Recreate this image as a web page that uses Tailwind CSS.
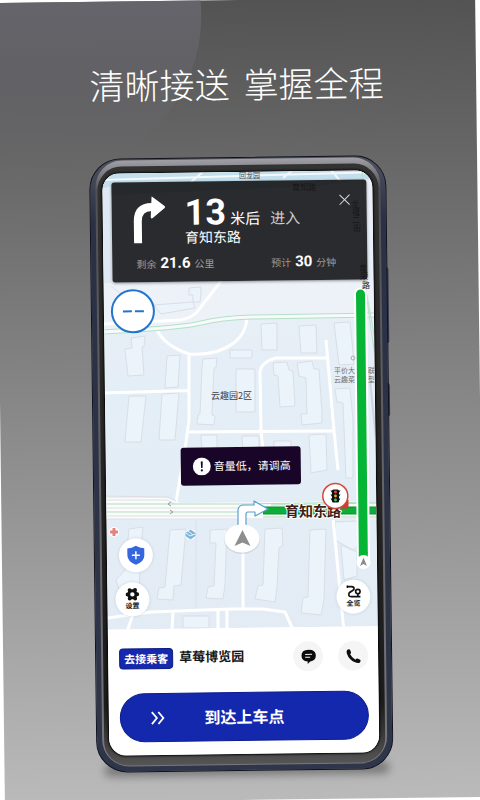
<!DOCTYPE html>
<html lang="zh-CN">
<head>
<meta charset="utf-8">
<meta name="viewport" content="width=device-width, initial-scale=1">
<title>清晰接送 掌握全程</title>
<script src="https://cdn.jsdelivr.net/npm/@tailwindcss/browser@4"></script>
</head>
<body class="bg-white font-['Noto_Sans','Noto_Sans_CJK_SC',sans-serif]">
<main class="min-h-screen overflow-hidden bg-white">
<div class="relative flex min-h-screen -rotate-[0.7deg] flex-col overflow-hidden bg-linear-to-b from-[#535353] via-[#878787] to-[#bababa] pb-[29px] pl-[92px] pr-[91px] pt-[59px]">
  <div class="absolute -left-[106px] -top-[142px] size-[312px] rounded-full bg-linear-to-b from-[#66666d] from-40% to-[#6a6a6e]/10" aria-hidden="true"></div>

  <h1 class="relative mb-[50px] flex justify-center gap-[14px] whitespace-nowrap font-['Noto_Sans_CJK_SC',sans-serif] text-[35px] font-light leading-[48px] text-white"><span>清晰接送</span><span>掌握全程</span></h1>

  <!-- Phone -->
  <div class="relative flex flex-1 flex-col">
    <div class="absolute -bottom-1 left-2 right-1 h-3 rounded-full bg-black/35 blur-[4px]" aria-hidden="true"></div>
    <div class="absolute -right-px top-[112px] h-[76px] w-1 rounded-sm bg-[#353b52]" aria-hidden="true"></div>
    <div class="absolute -right-px top-[228px] h-[33px] w-1 rounded-sm bg-[#353b52]" aria-hidden="true"></div>
    <div class="relative flex flex-1 flex-col rounded-[31px] border border-[#10131f] bg-linear-to-b from-[#50535f] via-[#2b3145] via-10% to-[#30364a] px-[5px] pb-[5px] pt-px">
      <div class="flex flex-1 flex-col rounded-[27px] bg-linear-to-b from-[#a0a0a6] via-[#505055] via-5% to-[#77777b] px-[2px] pb-px pt-[6px]">
        <div class="flex flex-1 flex-col rounded-[24px] bg-linear-to-b from-[#333] via-[#1c1c1c] via-90% to-[#555] pb-[10px] pl-[5px] pr-[6px] pt-[7px]">
          <div class="flex flex-1 flex-col overflow-hidden rounded-[17px] bg-white shadow-[0_0_2px_1px_#050505]">

            <!-- Map -->
            <section class="relative flex-1 overflow-hidden pl-[9px] pr-[6px] pt-[9px]" aria-label="导航地图">
              <svg class="absolute inset-0 size-full" viewBox="104 172 270 456" preserveAspectRatio="xMidYMid slice" font-family="Noto Sans CJK SC, sans-serif">
                <defs>
                  <linearGradient id="land" x1="0" x2="0" y1="0" y2="1"><stop offset="0" stop-color="#ecf0f8"/><stop offset=".5" stop-color="#e4eef6"/><stop offset="1" stop-color="#e3ecf5"/></linearGradient>
                </defs>
                <g transform="rotate(0.7 240 400)">
                  <rect x="90" y="160" width="300" height="480" fill="url(#land)"/>
                  <path d="M90 160H390V176L320 186L90 196Z" fill="#c3deec"/>
                  <path d="M100 180L380 172M190 182l14-12M282 178l10-8M330 170l10 12" stroke="#f2f8fb" stroke-width="2" fill="none"/>
                  <path d="M96 190L110 186V300H96Z" fill="#dfe9f3"/>
                  <path d="M103 283L250 281L374 280V313L230 317L205 322L103 330Z" fill="#edf1f8"/>
                  <!-- Buildings -->
                  <g fill="#ebf4fa" stroke="#d9dde6" stroke-width="1">
                    <path d="M153 305L192 302L194 308L160 314Z"/><path d="M188 288L200 287V294L199 302H192V295H188Z"/>
                    <path d="M130 338L144 336L143 347L141 347L143 375L127 376L124 349L131 348Z"/>
                    <path d="M166 356L179 355L177 387L164 388Z"/>
                    <path d="M202 359L216 358L215 368L213 368L211 415L214 416L213 425L196 424L197 415L199 414L201 368Z"/>
                    <path d="M128 396L145 396L140 442L124 442Z"/><path d="M161 394L178 393L174 440L158 440Z"/>
                    <path d="M229 350L251 350V358H229Z"/><path d="M235 369H254V412H235Z"/>
                    <path d="M260 324L276 323V350L261 350Z"/><path d="M298 326L315 325L316 353L300 353Z"/>
                    <path d="M333 323L349 322L352 352L353 364L338 365Z"/>
                    <path d="M272 363L286 362L288 370L292 371L294 406L279 407L277 376L273 375Z"/>
                    <path d="M296 363L311 361L313 369L318 369L321 413V423L301 425L300 414L306 414L305 378L298 376Z"/>
                    <path d="M334 389L349 388L352 420V478H345L342 403L336 402Z"/>
                    <path d="M200 435H216V450H201Z"/><path d="M241 436H258V448H242Z"/><path d="M273 441H290V450H273Z"/><path d="M308 435L325 434L326 470L310 473Z"/>
                    <path d="M128 529L142 527L140 548L138 590L118 589L115 580L124 570Z"/>
                    <path d="M169 530L185 529L180 585L173 586L172 600L156 599L158 588L164 587Z"/>
                    <path d="M209 530L226 529L224 585L222 599L205 598L207 587L213 586L215 543H209Z"/>
                    <path d="M264 529L281 528L282 545L278 548L276 587L274 602L254 599L257 586L262 585Z"/>
                    <path d="M309 530L325 529L323 600L320 615L300 613L302 598L307 597Z"/>
                    <path d="M334 522L356 521L358 545L352 550L334 540Z"/><path d="M340 545L356 552V576L343 580Z"/>
                    <path d="M182 616H208V628H182Z"/>
                  </g>
                  <path d="M195 520V610M110 286l10 8" stroke="#d8e2ec" stroke-width="1" fill="none"/>
                  <!-- Side streets -->
                  <g fill="none" stroke="#fff" stroke-width="3" stroke-linejoin="round">
                    <path d="M100 324L180 320Q190 318 196 312L224 276"/>
                    <path d="M156 330Q164 346 188 354Q216 356 234 342Q245 333 246 318"/>
                    <path d="M188 354V420L185 442L175 502M100 393L188 390.500M188 432L333 431"/>
                    <path d="M263 460L260 430L259 372Q260 362 275 358L326 358M325 340L333 431L337 470M332 518L343 632"/>
                    <path d="M242 545V609M100 619L150 612L230 609H262L284 612L293 632M172 611L171 630M217 609V630M226 609V630M132 614L126 632"/>
                  </g>
                  <g fill="none"><path d="M100 332Q180 328 200 323T250 317L376 315" stroke="#b4e0c8" stroke-width="5"/><path d="M100 332Q180 328 200 323T250 317L376 315" stroke="#f6fbfa" stroke-width="3"/></g>
                  <path d="M364 285L375 345V480M366 300L380 400M361 160L364 285" stroke="#b8e2c9" stroke-width="1" fill="none"/>
                  <path d="M368 370L376 450V500" stroke="#cfd3dc" stroke-width="2" fill="none"/>
                  <!-- Main road -->
                  <path d="M100 498L165 498L180 503L380 501V520L100 519Z" fill="#fafcfc"/>
                  <path d="M100 496L168 497L175 501M100 500L166 500L174 504M100 516H236M100 519H380M100 508H240" stroke="#dedee2" stroke-width="1" fill="none"/>
                  <path d="M100 504H240L380 502M100 512H240M270 505L380 503M262 517H380" stroke="#afdeba" stroke-width="1" fill="none"/>
                  <path d="M170 502l-3 2 3 2M169 510l3 2-3 2" stroke="#999" fill="none"/>
                  <!-- Route -->
                  <path d="M262 510.500H380" stroke="#0e8c34" stroke-width="8"/><path d="M262 510.500H380" stroke="#0bae36" stroke-width="6"/>
                  <path d="M359.500 294L362.500 562" stroke="#fff" stroke-width="13" stroke-linecap="round"/>
                  <path d="M359.500 294L362.300 552" stroke="#06b535" stroke-width="9" stroke-linecap="round"/>
                  <path d="M357.800 552H366.800V557H357.800Z" fill="#06b535"/>
                  <circle cx="362.500" cy="562" r="7" fill="#fff"/><path d="M362.500 557.500L366 566L362.500 564L359 566Z" fill="#8b8b8b"/>
                  <path d="M237 528V511Q237 505 243 505H253V501L267 509L254 516V512H247Q245 512 245 514V528Z" fill="#fff" stroke="#5a9fd0" stroke-width="1.200" stroke-linejoin="round"/>
                  <ellipse cx="241" cy="539.500" rx="18" ry="14.500" fill="#9aa7b5" opacity=".3"/>
                  <ellipse cx="241" cy="538.500" rx="17.500" ry="14" fill="#fff"/><path d="M241.500 530L249.500 546L241.500 542.500L233.500 546Z" fill="#8e8e8e"/>
                  <text x="284" y="516" font-size="14" font-weight="700" fill="#3b1f18" stroke="#fff" stroke-width="2" paint-order="stroke" stroke-linejoin="round">育知东路</text>
                  <path d="M339 508L347 500V508Z" fill="#d83a32" stroke="#d83a32"/>
                  <circle cx="334.300" cy="496" r="12.500" fill="#fff" stroke="#d4453d" stroke-width="1.500"/>
                  <rect x="331" y="489.500" width="7" height="13" rx="1.500" fill="#111"/><path d="M329.500 490.500h10l-2 3h-6zM329.500 494.500h10l-2 3h-6zM329.500 498.500h10l-2 3h-6z" fill="#111"/>
                  <circle cx="334.500" cy="492" r="1.400" fill="#e04b3c"/><circle cx="334.500" cy="496" r="1.400" fill="#e8a33a"/><circle cx="334.500" cy="500" r="1.400" fill="#44c35b"/>
                  <!-- Places -->
                  <circle cx="113" cy="532" r="5" fill="#fff"/><path d="M111.500 528h3v2.500h2.500v3h-2.500v2.500h-3v-2.500h-2.500v-3h2.500z" fill="#e5827f"/>
                  <circle cx="189.500" cy="534.500" r="5.500" fill="#f5fafd"/><path d="M189.500 529.500l5 3.500v3l-5 3.500-5-3.500v-3z" fill="#7fb4dc"/><path d="M185 533l4 3 5-2M187 531l5 4" stroke="#e8f3fb" fill="none"/>
                  <text x="238" y="178" font-size="7" fill="#4c4f55">回龙园</text>
                  <text x="210" y="399" font-size="9" fill="#3d4046">云趣园2区</text>
                  <g font-size="7" fill="#6c6f76"><text x="333" y="373">平价大</text><text x="333" y="382">云趣菜</text><text x="367" y="373">联</text><text x="367" y="382">型</text></g>
                  <circle cx="352" cy="358" r="2" fill="none" stroke="#a9abb0"/>
                  <g fill="#222" font-size="8"><text x="291" y="190">育知路</text><text x="350 351 351 352" y="207 215 223 231">龙禧二街</text><text x="358 359 361" y="271 279 288">育荣路</text></g>
                </g>
              </svg>

              <!-- Turn instruction -->
              <div class="relative h-[100px] rounded-[3px] bg-[#151517]/90 pt-[14px] text-white shadow-[0_1px_3px_#0006]">
                <svg class="absolute left-[21px] top-[14px] h-[48px] w-[34px]" viewBox="0 0 34 48" fill="none" aria-hidden="true"><path d="M5 47V25Q5 11 19 11H21" stroke="#fff" stroke-width="8"/><path d="M19 1Q18 0 20 1L32 10Q33 11 32 12L20 22Q18 23 18 21Z" fill="#fff"/></svg>
                <button type="button" aria-label="关闭" class="absolute right-[16px] top-[14px] size-[12px]"><svg viewBox="0 0 12 12" class="size-full" stroke="#ddd" stroke-width="1"><path d="M1 1l10 10M11 1L1 11"/></svg></button>
                <div class="pl-[73px]">
                  <p class="flex h-[34px] items-baseline whitespace-nowrap leading-none"><strong class="font-[Roboto] text-[36px] font-bold leading-[34px]">13</strong><span class="ml-[4px] text-[15px]">米后</span><span class="ml-[10px] text-[15px] text-[#cfcfcf]">进入</span></p>
                  <p class="text-[14px] leading-4">育知东路</p>
                </div>
                <div class="mt-[9px] flex justify-between whitespace-nowrap pl-[24px] pr-[31px] text-[10px] leading-4 text-[#9a9a9a]">
                  <p class="flex items-baseline gap-[4px]">剩余<strong class="font-[Roboto] text-[15px] leading-4 text-white">21.6</strong>公里</p>
                  <p class="flex items-baseline gap-[4px]">预计<strong class="font-[Roboto] text-[15px] leading-4 text-white">30</strong>分钟</p>
                </div>
              </div>

              <div class="relative -ml-[2px] mt-[7px] flex size-[44px] items-center justify-center gap-[3px] rounded-full border-2 border-[#2176cc] bg-white" role="img" aria-label="当前车速"><i class="h-[2px] w-[9px] bg-[#2176cc]"></i><i class="h-[2px] w-[9px] bg-[#2176cc]"></i></div>

              <div role="status" class="absolute left-1/2 top-[275px] flex h-[38px] w-[120px] -translate-x-1/2 items-center gap-[3px] whitespace-nowrap rounded-[3px] bg-[#180527] pl-[12px] text-[11px] text-white">
                <svg class="size-[18px] shrink-0" viewBox="0 0 18 18" aria-hidden="true"><circle cx="9" cy="9" r="9" fill="#fff"/><path d="M8 4h2l-.3 6.500h-1.400z" fill="#180527"/><circle cx="9" cy="13" r="1.100" fill="#180527"/></svg>音量低，请调高
              </div>

              <button type="button" aria-label="安全中心" class="absolute bottom-[57px] left-[12px] flex size-[34px] items-center justify-center rounded-full bg-white shadow-[0_0_3px_#8ea3b466]"><svg class="h-[20px] w-[18px]" viewBox="0 0 18 20"><path d="M9 .500Q13 3 17.500 3V10Q17.500 16 9 19.500Q.5 16 .5 10V3Q5 3 9 .5Z" fill="#3566dd"/><path d="M9 6v8M5 10h8" stroke="#fff" stroke-width="1.500"/></svg></button>
              <button type="button" class="absolute bottom-[13px] left-[8px] flex size-[34px] flex-col items-center justify-center rounded-full bg-white text-[7px] font-bold leading-[10px] text-[#111] shadow-[0_0_3px_#8ea3b466]"><svg class="h-[14px] w-[14px]" viewBox="0 0 14 14"><g fill="#111"><circle cx="7" cy="7" r="5"/><circle cx="4.300" cy="2.800" r="2"/><circle cx="9.700" cy="2.800" r="2"/><circle cx="2.200" cy="7" r="2"/><circle cx="11.800" cy="7" r="2"/><circle cx="4.300" cy="11.200" r="2"/><circle cx="9.700" cy="11.200" r="2"/></g><circle cx="7" cy="7" r="2.200" fill="#fff"/></svg>设置</button>
              <button type="button" class="absolute bottom-[13px] right-[7px] flex size-[34px] flex-col items-center justify-center rounded-full bg-white text-[7px] font-bold leading-[10px] text-[#111] shadow-[0_0_3px_#8ea3b466]"><svg class="h-[14px] w-[15px]" viewBox="0 0 15 14" fill="none" stroke="#111" stroke-width="1.700"><path d="M1 2H5Q8.500 2 7.500 5L3 8Q1 12 5 12H14"/><circle cx="11.500" cy="7" r="2.200"/><path d="M11.500 9V12M1 .8v2.400"/></svg>全览</button>
            </section>

            <!-- Trip panel -->
            <section class="bg-white pb-[13px] pl-[11px] pr-[10px] pt-[14px]">
              <div class="flex items-center whitespace-nowrap">
                <span class="rounded-[4px] border border-[#0b1c85] bg-[#1528ae] px-[4px] text-[11px] font-bold leading-[19px] text-white">去接乘客</span>
                <span class="ml-[6px] text-[13px] font-bold text-[#161616]">草莓博览园</span>
                <button type="button" aria-label="发消息" class="ml-auto flex size-[30px] items-center justify-center rounded-full bg-[#f5f5f5]"><svg class="size-[15px]" viewBox="0 0 15 15"><path d="M7.500 .5Q14.700 .5 14.700 6.500Q14.700 11.500 9 12.300L6.500 14.800V12.400Q.3 11.800 .3 6.500Q.3 .5 7.500 .5Z" fill="#0c0c0c"/><path d="M4 5.200h7M4 8h5" stroke="#f5f5f5" stroke-width="1"/></svg></button>
                <button type="button" aria-label="打电话" class="ml-[15px] flex size-[30px] items-center justify-center rounded-full bg-[#f5f5f5]"><svg class="size-[15px]" viewBox="0 0 15 15"><path d="M1 1.200Q3 0 4 1L5 3.800Q5 4.800 3.900 5.400Q5.500 9 9.300 11.100Q10.100 9.700 11.200 10L14 11.300Q15 12.500 13.700 14Q12 15 9.500 14Q3 11.500 .8 5Q0 2.500 1 1.200Z" fill="#0c0c0c"/></svg></button>
              </div>
              <button type="button" class="relative mt-[20px] flex h-[49px] w-full items-center justify-center rounded-full border border-[#0c1d8c] bg-[#1428ad] text-[16px] font-bold text-white"><svg class="absolute left-[30px] h-[14px] w-[14px]" viewBox="0 0 14 14" fill="none" stroke="#fff" stroke-width="1.800"><path d="M1 1l5 6-5 6M7.500 1l5 6-5 6"/></svg>到达上车点</button>
            </section>
          </div>
        </div>
      </div>
    </div>
  </div>
</div>
</main>
</body>
</html>
